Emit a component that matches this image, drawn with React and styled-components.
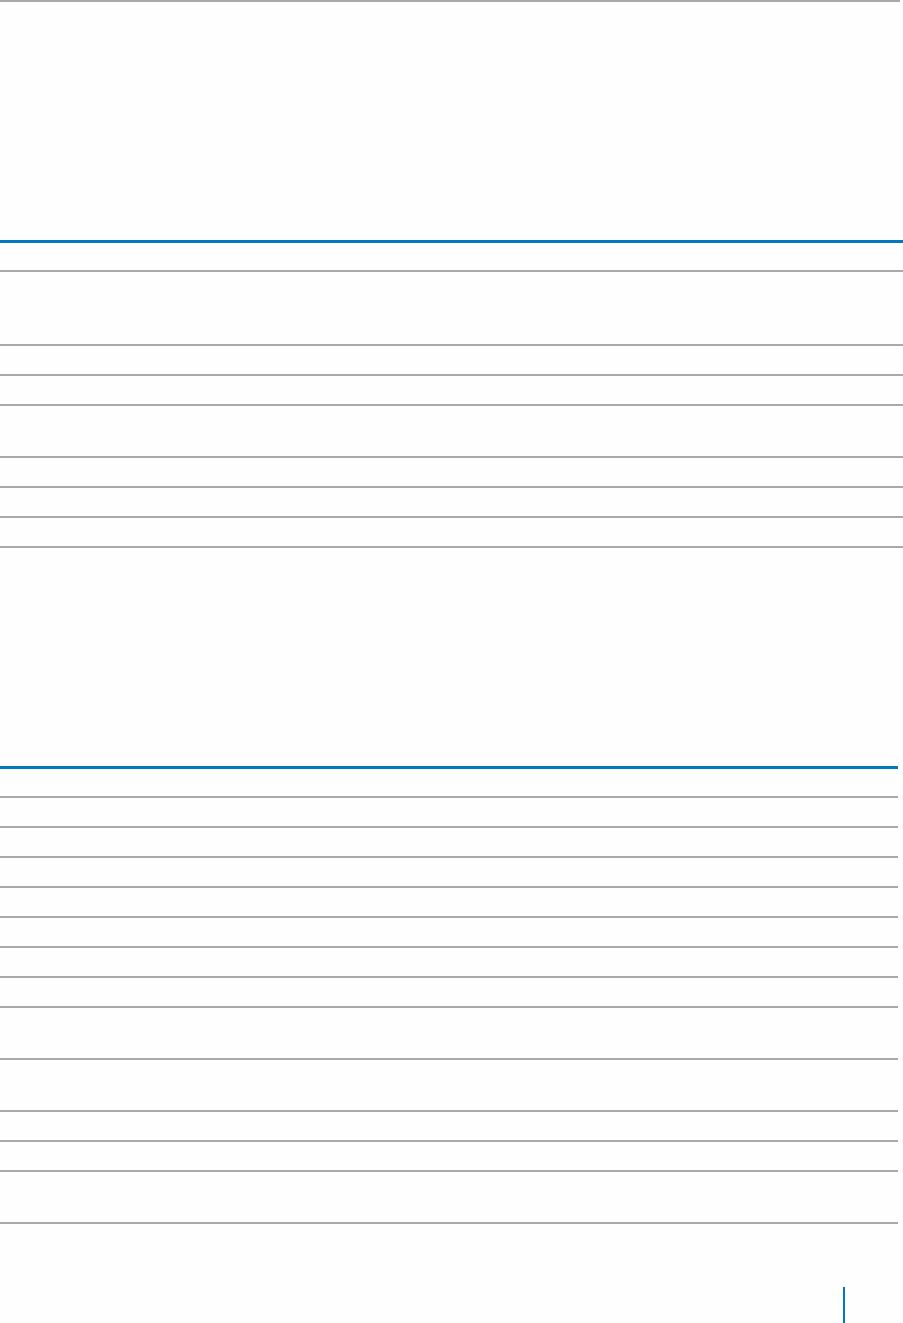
import React from 'react';
import styled, {createGlobalStyle} from 'styled-components';

// the page is a printed document: two ruled tables, text is blank
const GlobalStyle = createGlobalStyle`
  html, body {
    margin: 0;
    padding: 0;
    background: #fefefe;
    font-family: "Liberation Sans", Arial, sans-serif;
  }
`;

const BLUE = '#0079bd';
const GREY = '#a9a9a9';

const table1 = [29, 74, 30, 30, 52, 30, 30, 30];
const table2 = [29, 30, 30, 30, 30, 30, 30, 30, 52, 52, 30, 30, 52];

const Page = styled.div`
  width: 903px;
  height: 1323px;
  display: flex;
  flex-direction: column;
  overflow: hidden;
`;

const TopRule = styled.div`
  width: 900px;
  height: 2px;
  background: ${GREY};
`;

const Table = styled.div`
  width: ${props => props.$width}px;
  margin-top: ${props => props.$top}px;
  border-top: 3px solid ${BLUE};
  display: flex;
  flex-direction: column;
`;

const Row = styled.div`
  box-sizing: border-box;
  height: ${props => props.$h}px;
  border-bottom: 2px solid ${GREY};
  display: grid;
  grid-template-columns: 1fr 2fr 1fr;
`;

const Cell = styled.div`
  padding: 6px 8px;
  font-size: 13px;
  color: #fefefe;
`;

const Footer = styled.footer`
  margin-top: auto;
  display: flex;
  justify-content: flex-end;
  padding-right: 58px;
`;

const PageDivider = styled.div`
  width: 2px;
  height: 36px;
  background: ${BLUE};
`;

const DocTable = ({rows, width, top}) => (
  <Table $width={width} $top={top}>
    {rows.map((h, i) => (
      <Row key={i} $h={h}>
        <Cell />
        <Cell />
        <Cell />
      </Row>
    ))}
  </Table>
);

export default function App() {
  return (
    <Page>
      <GlobalStyle />
      <TopRule />
      <DocTable rows={table1} width={903} top={238} />
      <DocTable rows={table2} width={898} top={218} />
      <Footer>
        <PageDivider />
      </Footer>
    </Page>
  );
}
